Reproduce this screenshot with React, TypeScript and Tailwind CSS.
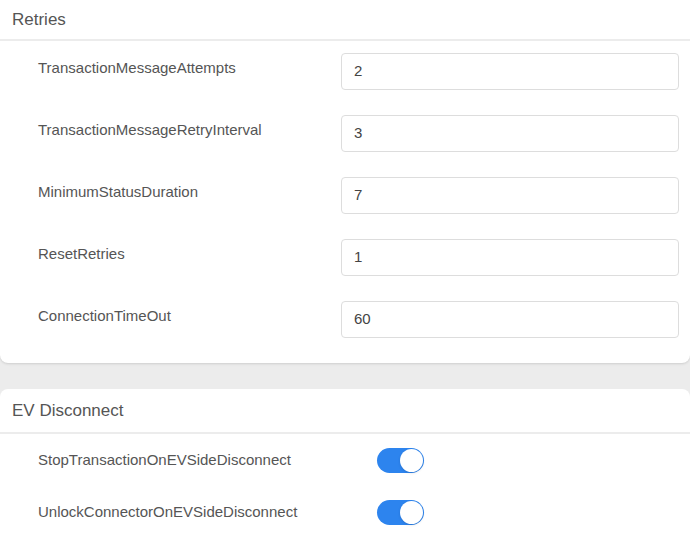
const retries = [
  { label: "TransactionMessageAttempts", value: "2" },
  { label: "TransactionMessageRetryInterval", value: "3" },
  { label: "MinimumStatusDuration", value: "7" },
  { label: "ResetRetries", value: "1" },
  { label: "ConnectionTimeOut", value: "60" },
]

const toggles = ["StopTransactionOnEVSideDisconnect", "UnlockConnectorOnEVSideDisconnect"]

const App = () => {
  return (
    <div className="w-[690px] h-[537px] overflow-hidden bg-[#ececec] font-[Liberation_Sans,Arial,sans-serif] text-[#555]">
      <div className="bg-white rounded-b-lg shadow-sm">
        <div className="h-[41px] border-b-2 border-[#ececec] pl-[12px] flex items-center text-[17px] text-[#555]">
          Retries
        </div>
        <div className="pt-[12px]">
          {retries.map((r) => (
            <div key={r.label} className="h-[62px] flex items-start">
              <div className="w-[341px] pl-[38px] pt-[4px] text-[15px]">{r.label}</div>
              <div className="w-[338px] h-[37px] border border-[#ddd] rounded-[4px] flex items-center px-[12px] text-[15px] text-[#444]">
                {r.value}
              </div>
            </div>
          ))}
        </div>
      </div>
      <div className="h-[26px]" />
      <div className="bg-white rounded-t-lg h-[200px]">
        <div className="h-[45px] border-b-2 border-[#ececec] pl-[12px] flex items-center text-[17px] text-[#555]">
          EV Disconnect
        </div>
        <div>
          {toggles.map((t) => (
            <div key={t} className="h-[52px] flex items-center">
              <div className="w-[377px] pl-[38px] text-[15px]">{t}</div>
              <div className="w-[47px] h-[25px] rounded-full bg-[#2d84ee] relative">
                <div className="absolute right-[1px] top-[1px] w-[23px] h-[23px] rounded-full bg-white shadow" />
              </div>
            </div>
          ))}
        </div>
      </div>
    </div>
  )
}
export default App
